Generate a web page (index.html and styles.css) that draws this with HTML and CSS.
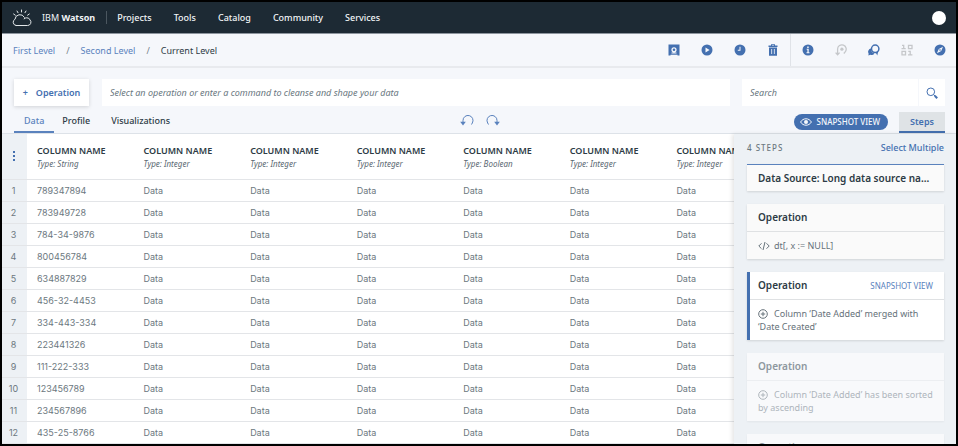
FILE: index.html
```html
<!DOCTYPE html>
<html lang="en">
<head>
<meta charset="utf-8">
<title>IBM Watson</title>
<link rel="stylesheet" href="styles.css">
</head>
<body>
<div class="app">
  <header class="topbar">
    <svg class="logo" viewBox="0 0 20 18" aria-hidden="true"><path d="M4 16.500h11.500a3.300 3.300 0 0 0 2.500-5.600 3.300 3.300 0 0 0-3.200-2.100 4 4 0 0 0-2.700 1 M4 16.500a3.300 3.300 0 0 1-1-6.200 5 5 0 0 1 9.400-2 M9.500 3V1 M6 3.700 5 2 M13 3.700l1-1.700 M3.300 6.200 1.600 5 M15.600 6.200 17.300 5"/></svg>
    <span class="brand">IBM <b>Watson</b></span>
    <nav class="mainnav">
      <a href="#">Projects</a><a href="#">Tools</a><a href="#">Catalog</a><a href="#">Community</a><a href="#">Services</a>
    </nav>
    <button class="avatar" aria-label="Account"></button>
  </header>

  <div class="subbar">
    <nav class="crumbs" aria-label="Breadcrumb">
      <a href="#">First Level</a><i>/</i><a href="#">Second Level</a><i>/</i><span>Current Level</span>
    </nav>
    <div class="actions">
      <button aria-label="Save"><svg viewBox="0 0 12 12"><path fill-rule="evenodd" d="M.5.5h11v11h-2v-.8h-7v.8h-2zM6 3.200a2.600 2.600 0 1 0 0 5.200 2.600 2.600 0 0 0 0-5.200zM3.500 8.600h5v.8h-5z"/><circle cx="6" cy="5.800" r="1.300"/></svg></button>
      <button aria-label="Run"><svg viewBox="0 0 12 12"><path fill-rule="evenodd" d="M6 .5a5.500 5.500 0 1 0 0 11 5.500 5.500 0 0 0 0-11zM4.500 3.500v5L8.600 6z"/></svg></button>
      <button aria-label="Schedule"><svg viewBox="0 0 12 12"><path fill-rule="evenodd" d="M6 .5a5.500 5.500 0 1 0 0 11 5.500 5.500 0 0 0 0-11zM5.500 2.800h1v4H3.800v-1h1.700z"/></svg></button>
      <button aria-label="Delete"><svg viewBox="0 0 12 12"><path fill-rule="evenodd" d="M1.500 1.500H4V.3h4v1.200h2.500V3h-9zM5 1.500h2V1H5zM2 3.600h8v8.100H2zM4.300 5v5h.8V5zM6.900 5v5h.8V5z"/></svg></button>
    </div>
    <div class="actions panels">
      <button aria-label="Information"><svg viewBox="0 0 12 12"><path fill-rule="evenodd" d="M6 .5a5.500 5.500 0 1 0 0 11 5.500 5.500 0 0 0 0-11zM5.200 2.500h1.500v1.400H5.200zM4.700 4.800h2v3.500h.8v1h-3v-1h.9V5.700h-.7z"/></svg></button>
      <button class="off" aria-label="Revert" disabled><svg viewBox="0 0 12 12"><path class="line" d="M2.600 10.500V5.200a4.300 4.300 0 1 1 7.400 2.900L8.800 9.500M.6 8.600l2 2.200 2-2.200"/><circle cx="6.900" cy="5.200" r="1.600"/></svg></button>
      <button aria-label="Comments"><svg viewBox="0 0 12 12"><circle class="line strong" cx="7.200" cy="4.800" r="3.700"/><path d="M3 4.600a3.200 3.200 0 0 0-2.400 4.900L.4 11.600l2-.9a3.300 3.300 0 0 0 4-1.300A5 5 0 0 1 3 4.600zM7.500 8.200l1.800 3.200.8-3.600z"/></svg></button>
      <button class="off" aria-label="Data values" disabled><svg viewBox="0 0 12 12"><path class="line" d="M1 1.400h1.700v3.300M.5 4.700h4.200M7.500 1.300h3.500v3.400H7.500zM1 7.300h3.500v3.500H1zM7.300 7.300h1.900v3.500M7 10.800h4.400"/></svg></button>
      <button aria-label="Explore"><svg viewBox="0 0 12 12"><path fill-rule="evenodd" d="M6 .5a5.500 5.500 0 1 0 0 11 5.500 5.500 0 0 0 0-11zM9 2.800 7.200 7 2.900 9.200 4.800 5z"/><circle cx="6" cy="6" r=".8"/></svg></button>
    </div>
  </div>

  <div class="command">
    <button class="op"><span>+</span>Operation</button>
    <input class="prompt" type="text" aria-label="Command" placeholder="Select an operation or enter a command to cleanse and shape your data">
    <form class="search">
      <input type="search" aria-label="Search" placeholder="Search">
      <button type="button" aria-label="Search"><svg viewBox="0 0 12 12"><circle cx="4.800" cy="4.800" r="3.800"/><path d="M7.600 7.600 9 9"/><path class="handle" d="M8.800 8.800l2.400 2.400"/></svg></button>
    </form>
  </div>

  <div class="tabbar">
    <nav class="tabs"><a class="active" href="#">Data</a><a href="#">Profile</a><a href="#">Visualizations</a></nav>
    <div class="history">
      <button aria-label="Undo"><svg viewBox="0 0 14 12"><path d="M3 9.500V6.500a5 5 0 1 1 9.300 2.500L11.500 10.500"/><path class="tip" d="M.2 7.800h5.600L3 11.500z"/></svg></button>
      <button aria-label="Redo"><svg viewBox="0 0 14 12"><path d="M11 9.500V6.500a5 5 0 1 0-9.300 2.500L2.500 10.500"/><path class="tip" d="M13.800 7.800H8.200L11 11.500z"/></svg></button>
    </div>
    <div class="views">
      <button class="pill"><svg viewBox="0 0 12 8"><path d="M.6 4C3-.3 9-.3 11.400 4 9 8.300 3 8.300.6 4z"/><circle cx="6" cy="4" r="2"/></svg>SNAPSHOT VIEW</button>
      <button class="steps-tab">Steps</button>
    </div>
  </div>

  <main class="work">
    <div class="grid">
      <table>
        <thead><tr><th class="idx"><button class="dots" aria-label="Table options"><svg viewBox="0 0 4 12"><path d="M1 1h2v2H1zM1 5h2v2H1zM1 9h2v2H1z"/></svg></button></th>
          <th>COLUMN NAME<em>Type: String</em></th><th>COLUMN NAME<em>Type: Integer</em></th><th>COLUMN NAME<em>Type: Integer</em></th><th>COLUMN NAME<em>Type: Integer</em></th><th>COLUMN NAME<em>Type: Boolean</em></th><th>COLUMN NAME<em>Type: Integer</em></th><th>COLUMN NAME<em>Type: Integer</em></th></tr></thead>
        <tbody>
          <tr><td class="idx">1</td><td>789347894</td><td>Data</td><td>Data</td><td>Data</td><td>Data</td><td>Data</td><td>Data</td></tr>
          <tr><td class="idx">2</td><td>783949728</td><td>Data</td><td>Data</td><td>Data</td><td>Data</td><td>Data</td><td>Data</td></tr>
          <tr><td class="idx">3</td><td>784-34-9876</td><td>Data</td><td>Data</td><td>Data</td><td>Data</td><td>Data</td><td>Data</td></tr>
          <tr><td class="idx">4</td><td>800456784</td><td>Data</td><td>Data</td><td>Data</td><td>Data</td><td>Data</td><td>Data</td></tr>
          <tr><td class="idx">5</td><td>634887829</td><td>Data</td><td>Data</td><td>Data</td><td>Data</td><td>Data</td><td>Data</td></tr>
          <tr><td class="idx">6</td><td>456-32-4453</td><td>Data</td><td>Data</td><td>Data</td><td>Data</td><td>Data</td><td>Data</td></tr>
          <tr><td class="idx">7</td><td>334-443-334</td><td>Data</td><td>Data</td><td>Data</td><td>Data</td><td>Data</td><td>Data</td></tr>
          <tr><td class="idx">8</td><td>223441326</td><td>Data</td><td>Data</td><td>Data</td><td>Data</td><td>Data</td><td>Data</td></tr>
          <tr><td class="idx">9</td><td>111-222-333</td><td>Data</td><td>Data</td><td>Data</td><td>Data</td><td>Data</td><td>Data</td></tr>
          <tr><td class="idx">10</td><td>123456789</td><td>Data</td><td>Data</td><td>Data</td><td>Data</td><td>Data</td><td>Data</td></tr>
          <tr><td class="idx">11</td><td>234567896</td><td>Data</td><td>Data</td><td>Data</td><td>Data</td><td>Data</td><td>Data</td></tr>
          <tr><td class="idx">12</td><td>435-25-8766</td><td>Data</td><td>Data</td><td>Data</td><td>Data</td><td>Data</td><td>Data</td></tr>
        </tbody>
      </table>
    </div>
    <aside class="side">
      <div class="side-head"><span>4 STEPS</span><a href="#">Select Multiple</a></div>
      <section class="card source"><h3>Data Source: Long data source name</h3></section>
      <section class="card">
        <h3>Operation</h3>
        <p><svg viewBox="0 0 12 10"><path d="M3.500 2.300.8 5l2.700 2.700M8.500 2.300 11.200 5 8.500 7.700M7 1 5 9"/></svg>dt[, x := NULL]</p>
      </section>
      <section class="card current">
        <h3>Operation<small>SNAPSHOT VIEW</small></h3>
        <p><svg viewBox="0 0 12 10"><circle cx="5" cy="5" r="4.300"/><path d="M5 2.800v4.400M2.800 5h4.400"/></svg>Column ‘Date Added’ merged with ‘Date Created’</p>
      </section>
      <section class="card later">
        <h3>Operation</h3>
        <p><svg viewBox="0 0 12 10"><circle cx="5" cy="5" r="4.300"/><path d="M5 2.800v4.400M2.800 5h4.400"/></svg>Column ‘Date Added’ has been sorted by ascending</p>
      </section>
      <section class="card later"><h3>Operation</h3></section>
    </aside>
  </main>
</div>
</body>
</html>
```

FILE: styles.css
```css
* { box-sizing: border-box; }

body {
  margin: 0;
  font-family: "Noto Sans", "Liberation Sans", sans-serif;
  font-size: 9px;
  line-height: 13px;
  color: #2d3b45;
}

button, input { font: inherit; color: inherit; border: 0; padding: 0; margin: 0; background: none; }
button { cursor: pointer; }
a { color: inherit; text-decoration: none; }
svg { display: block; }

.app {
  height: 100vh;
  border: 2px solid #000;
  background: #f5f7fb;
  display: flex;
  flex-direction: column;
  overflow: hidden;
}

.topbar {
  flex: none;
  height: 32px;
  padding: 0 10px;
  display: flex;
  align-items: center;
  background: #1d2a34;
  border-bottom: 1px solid #8d959e;
  color: #f1f4f6;
}
.logo { width: 20px; height: 18px; fill: none; stroke: #e3e8ea; stroke-width: 1; stroke-linecap: round; }
.brand { margin-left: 10px; }
.mainnav {
  margin-left: 11px;
  padding-left: 10px;
  border-left: 1px solid #4b5760;
  display: flex;
  gap: 22px;
  font-weight: 500;
}
.avatar { margin-left: auto; width: 14px; height: 14px; border-radius: 50%; background: #fff; }

.subbar {
  flex: none;
  height: 34px;
  padding: 0 10px 0 11px;
  border-bottom: 2px solid #e8eaee;
  display: flex;
  align-items: center;
}
.crumbs { display: flex; gap: 11px; margin-right: auto; }
.crumbs a { color: #5a82bd; }
.crumbs i { font-style: normal; color: #77828a; }
.actions { display: flex; gap: 21px; align-items: center; padding-right: 11px; height: 100%; }
.panels { border-left: 1px solid #e0e3e8; padding: 0 0 0 11px; }
.actions svg { width: 12px; height: 12px; fill: #4470b0; }
.actions .line { fill: none; stroke: #4470b0; stroke-width: 1; }
.actions .strong { stroke-width: 1.5; }
.actions .off svg { fill: #c5c7ca; }
.actions .off .line { stroke: #c5c7ca; stroke-width: 1.3; }

.command { flex: none; display: flex; padding: 11px 11px 0 12px; height: 38px; }
.op {
  width: 75px;
  background: #fff;
  box-shadow: 0 1px 4px rgba(0, 0, 0, .15);
  color: #4470b0;
  font-weight: 600;
}
.op span { margin-right: 8px; }
.prompt { flex: 1; margin: 0 12px 0 13px; }
.prompt, .search input { background: #fff; padding: 0 8px; font-style: italic; }
::placeholder { color: #697780; opacity: 1; }
.search { display: flex; gap: 1px; }
.search input { width: 176px; }
.search button { width: 26px; background: #fff; display: grid; place-items: center; }
.search svg { width: 12px; height: 12px; fill: none; stroke: #4470b0; stroke-width: 1; }
.search .handle { stroke-width: 2; }

.tabbar {
  flex: none;
  height: 28px;
  padding: 0 11px 0 12px;
  border-bottom: 1px solid #dde2e8;
  display: grid;
  grid-template-columns: 1fr auto 1fr;
}
.tabs { display: flex; font-weight: 500; }
.tabs a { padding: 8px 11px 0; }
.tabs a + a { padding: 8px 13px 0 8px; }
.tabs .active { padding: 8px 10px 0; color: #5a82bd; border-bottom: 2px solid #5a82bd; }
.history { display: flex; gap: 12px; align-items: center; }
.history svg { width: 14px; height: 12px; fill: none; stroke: #5a82bd; stroke-width: 1; }
.history .tip { fill: #5a82bd; stroke: none; }
.views { display: flex; justify-content: flex-end; align-items: flex-end; gap: 11px; }
.pill {
  height: 16px;
  margin-bottom: 3px;
  padding: 0 8px 0 6px;
  border-radius: 8px;
  background: #4470b0;
  color: #f4f7fb;
  font-size: 8px;
  line-height: 16px;
  font-weight: 500;
  display: flex;
  align-items: center;
  gap: 5px;
}
.pill svg { width: 12px; height: 8px; fill: none; stroke: #f4f7fb; }
.pill circle { fill: #f4f7fb; stroke: none; }
.steps-tab { width: 46px; height: 21px; background: #dfe3e6; border-bottom: 2px solid #4470b0; color: #4470b0; font-weight: 600; }

.work { flex: 1; min-height: 0; display: flex; }
.grid { flex: 1; min-width: 0; overflow: hidden; background: #fff; }
table { width: 100%; min-width: 771px; table-layout: fixed; border-collapse: collapse; }
th, td { padding: 0 0 0 10px; text-align: left; border-bottom: 1px solid #e3e5e8; }
th { height: 45px; padding-top: 1px; font-weight: 600; }
th em { display: block; font-size: 8px; font-weight: 400; color: #5b6972; }
td { height: 22px; color: #6c7880; font-family: Inter, sans-serif; }
.idx { width: 25px; padding: 0 2px 0 0; text-align: center; background: #edf1f5; }
.dots { display: block; margin: 0 auto; }
.dots svg { width: 4px; height: 12px; fill: #4470b0; }

.side {
  flex: none;
  width: 222px;
  padding: 0 12px 0 13px;
  background: #edf1f5;
  box-shadow: -2px 0 4px rgba(0, 0, 0, .1);
  z-index: 1;
  overflow: hidden;
}
.side-head { display: flex; justify-content: space-between; padding: 7px 0 10px; color: #5a82bd; font-weight: 500; }
.side-head span { font-size: 8px; letter-spacing: 1px; color: #6c7880; }
.side-head a { color: #4470b0; }
.card { margin-bottom: 13px; background: #fafafa; box-shadow: 0 1px 2px rgba(0, 0, 0, .12); }
.card h3 {
  margin: 0;
  height: 27px;
  padding: 0 11px;
  font-size: 10px;
  line-height: 27px;
  font-weight: 600;
  display: flex;
  justify-content: space-between;
}
.card p { margin: 0; padding: 7px 11px; border-top: 1px solid #dfe1e3; color: #66727a; }
.card p svg { display: inline-block; width: 12px; height: 10px; margin-right: 4px; vertical-align: -2px; fill: none; stroke: #66727a; }
.card.source { border-top: 1px solid #5a82bd; }
.card.source h3 { display: block; height: 26px; line-height: 26px; overflow: hidden; white-space: nowrap; text-overflow: ellipsis; }
.current { background: #fff; border-left: 3px solid #4470b0; }
.current h3, .current p { padding-left: 8px; }
.card small { font-size: 8px; font-weight: 400; color: #5a82bd; }
.later { background: #f8f9fb; box-shadow: 0 1px 2px rgba(0, 0, 0, .05); }
.later h3 { color: #8d979e; }
.later p { color: #aeb5bb; border-color: #eceef1; }
.later p svg { stroke: #aeb5bb; }
```
